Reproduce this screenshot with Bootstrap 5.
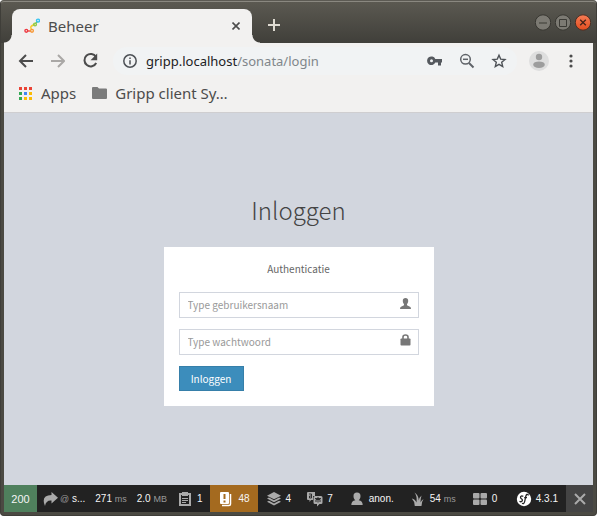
<!DOCTYPE html>
<html lang="nl">
<head>
<meta charset="utf-8">
<meta name="viewport" content="width=device-width, initial-scale=1">
<title>Beheer</title>
<link href="https://cdn.jsdelivr.net/npm/bootstrap@5.3.0/dist/css/bootstrap.min.css" rel="stylesheet">
<style>
body { background: #fff; }
svg { display: block; flex: none; }
button { border: 0; padding: 0; background: none; }
.window-frame { background: #4b4a43; border: 1px solid #3f3e39; border-top-color: #5c5a53; border-radius: 4px; padding: 0 3px 3px; font-family: "Noto Sans", "Open Sans", sans-serif; font-size: 15px; }
.title-bar { height: 42px; margin: 0 -3px; padding: 0 5px 0 8px; background: linear-gradient(#5b5951, #403f3a); border-top: 1px solid #8a8880; border-radius: 3px 3px 0 0; }
.browser-tab { position: relative; width: 240px; height: 34px; margin-left: 3px; padding: 0 12px; background: #f2f1f0; border-radius: 8px 8px 0 0; color: #4c4c4c; }
.browser-tab::before, .browser-tab::after { content: ""; position: absolute; bottom: 0; width: 8px; height: 8px; }
.browser-tab::before { left: -8px; background: radial-gradient(circle at 0 0, transparent 7px, #f2f1f0 8px); }
.browser-tab::after { right: -8px; background: radial-gradient(circle at 100% 0, transparent 7px, #f2f1f0 8px); }
.chrome-area { background: #f2f1f0; color: #4c4c4c; border-bottom: 1px solid #cfced0; }
.nav-row { height: 35px; padding: 0 16px 0 13px; }
.address-box { height: 28px; margin-left: 12px; border-radius: 14px; background: #f1f3f4; padding: 0 10px; }
.address-text { color: #202124; font-size: 13px; line-height: 20px; margin-left: 9px; }
.address-text span { color: #80868b; }
.marks-row { height: 34px; padding: 0 15px 4px; }
.marks-row a { color: #4c4c4c; }
.page-area { background: #d2d6de; font-family: "Noto Sans CJK SC", sans-serif; }
.login-title { font-size: 24px; line-height: 36px; font-weight: 200; color: #444; margin: 79px 0 19px; }
.login-panel { width: 270px; background: #fff; padding: 15px; margin-bottom: 79px; }
.login-note { font-size: 10px; line-height: 14px; color: #666; margin-bottom: 16px; }
.field-box { border: 1px solid #d2d6de; height: 26px; padding: 0 7px 0 8px; margin-bottom: 11px; }
.field-box input { border: 0; outline: 0; padding: 0; min-width: 0; font-size: 10px; line-height: 16px; color: #555; }
.field-box input::placeholder { color: #999; opacity: 1; }
.login-btn { height: 25px; width: 65px; background: #3c8dbc; border: 1px solid #367fa9; color: #fff; font-size: 10px; line-height: 16px; }
.debug-bar { background: #222; height: 27px; color: #f5f5f5; font-family: "Liberation Sans", Arial, sans-serif; font-size: 10px; line-height: 14px; }
.debug-bar a, .debug-close { display: flex; flex: none; align-items: center; height: 100%; padding: 0 8px; gap: 4px; color: #f5f5f5; text-decoration: none; white-space: nowrap; }
.debug-bar i { font-style: normal; font-size: 9px; color: #999; }
.debug-bar .state-code { width: 33px; padding: 0; justify-content: center; background: #4f805d; font-size: 11px; }
.debug-bar .pad-route { padding: 0 5px; gap: 2px; }
.debug-bar .pad-slim { padding: 0 5px; }
.debug-bar .pad-mem { padding: 0 2px 0 5px; }
.debug-bar .state-warn { background: #a46a1f; }
.debug-bar .debug-close { width: 27px; padding: 0; justify-content: center; background: #444; }
</style>
<script src="https://cdn.jsdelivr.net/npm/bootstrap@5.3.0/dist/js/bootstrap.bundle.min.js"></script>
</head>
<body>
<div class="window-frame min-vh-100 d-flex flex-column">
  <header class="title-bar d-flex align-items-end">
    <div class="browser-tab d-flex align-items-center">
      <svg width="16" height="16" viewBox="0 0 16 16" fill="none" stroke-width="1.4"><path d="M3 13H7" stroke="#f04a3a"/><path d="M7.500 11.500Q5.500 8 9 7.500" stroke="#f9c31f"/><path d="M8 7.500L11 6.500" stroke="#f0d52b"/><path d="M11.500 5.500L13.500 3.500" stroke="#79c65b"/><circle cx="2.300" cy="12.800" r="1.400" stroke="#ee3942"/><circle cx="8" cy="12.800" r="1.400" stroke="#f79a39"/><circle cx="11" cy="6.500" r="1.400" stroke="#8cc84b"/><circle cx="14" cy="2.600" r="1.500" stroke="#35c3f0"/></svg>
      <span class="ms-2 flex-grow-1">Beheer</span>
      <button type="button" aria-label="Tab sluiten"><svg width="8" height="8" viewBox="0 0 8 8" stroke="#4c4c4c" stroke-width="1.600"><path d="M.5 .5L7.500 7.500M7.500 .5L.5 7.500"/></svg></button>
    </div>
    <button type="button" class="ms-3 mb-2 pb-1" aria-label="Nieuw tabblad"><svg width="12" height="12" viewBox="0 0 12 12" stroke="#dfdbd2" stroke-width="2"><path d="M6 0V12M0 6H12"/></svg></button>
    <div class="d-flex ms-auto mb-2 pb-1 gap-1">
      <button type="button" aria-label="Minimaliseren"><svg width="16" height="17" viewBox="0 0 16 17"><circle cx="8" cy="8.500" r="7.700" fill="#7c7a73" stroke="#383732"/><path d="M4 9H12" stroke="#3b3a35"/></svg></button>
      <button type="button" aria-label="Maximaliseren"><svg width="16" height="17" viewBox="0 0 16 17"><circle cx="8" cy="8.500" r="7.700" fill="#7c7a73" stroke="#383732"/><path d="M4.500 5.500H11.500V12.500H4.500Z" fill="none" stroke="#3b3a35"/></svg></button>
      <button type="button" aria-label="Sluiten"><svg width="16" height="17" viewBox="0 0 16 17"><defs><linearGradient id="closeFill" x2="0" y2="1"><stop stop-color="#f57c55"/><stop offset="1" stop-color="#e24d1f"/></linearGradient></defs><circle cx="8" cy="8.500" r="7.700" fill="url(#closeFill)" stroke="#4a2f25"/><path d="M5.200 5.700L10.800 11.300M10.800 5.700L5.200 11.300" stroke="#43231a" stroke-width="1.300"/></svg></button>
    </div>
  </header>

  <div class="chrome-area">
    <nav class="nav-row d-flex align-items-center">
      <button type="button" aria-label="Terug"><svg width="18" height="18" viewBox="0 0 18 18" fill="none" stroke="#4c4c4c" stroke-width="2"><path d="M16 9H3M9 3L3 9L9 15"/></svg></button>
      <button type="button" class="ms-3" aria-label="Vooruit"><svg width="14" height="18" viewBox="0 0 14 18" fill="none" stroke="#aaa8a6" stroke-width="2"><path d="M0 9H13M7 3L13 9L7 15"/></svg></button>
      <button type="button" class="ms-3" aria-label="Vernieuwen"><svg width="20" height="18" viewBox="0 0 20 18"><path d="M15 5A6.200 6.200 0 1 0 15.200 11" fill="none" stroke="#4c4c4c" stroke-width="2"/><path d="M16.200 1.500V8.200H9.500Z" fill="#4c4c4c"/></svg></button>
      <div class="address-box d-flex align-items-center flex-grow-1">
        <svg width="14" height="14" viewBox="0 0 14 14" fill="none" stroke="#4d5156" stroke-width="1.500"><circle cx="7" cy="7" r="6.200"/><path d="M7 6.200V10.500M7 3.500V5"/></svg>
        <div class="address-text flex-grow-1">gripp.localhost<span>/sonata/login</span></div>
        <div class="d-flex align-items-center gap-3">
          <button type="button" aria-label="Wachtwoorden"><svg width="16" height="14" viewBox="0 0 16 14"><path fill="#55595e" fill-rule="evenodd" d="M8.300 5A4.300 4.300 0 1 0 8.300 8.500H11V11.500H14V8.500H15V5ZM4.500 5.200A1.500 1.500 0 1 1 4.500 8.200A1.500 1.500 0 0 1 4.500 5.200Z"/></svg></button>
          <button type="button" aria-label="Zoom"><svg width="16" height="16" viewBox="0 0 16 16" fill="none" stroke="#5f6368" stroke-width="1.500"><circle cx="6.500" cy="6.300" r="4.800"/><path d="M4 6.300H9"/><path d="M10 10L14.500 14.500" stroke-width="1.900"/></svg></button>
          <button type="button" aria-label="Bladwijzer"><svg width="16" height="16" viewBox="0 0 16 16" fill="none" stroke="#4d5156" stroke-width="1.400"><path d="M8 2.200L9.700 6.100L14 6.500L10.700 9.300L11.700 13.600L8 11.300L4.300 13.600L5.300 9.300L2 6.500L6.300 6.100Z"/></svg></button>
        </div>
      </div>
      <button type="button" class="ms-2 ps-1" aria-label="Profiel"><svg width="20" height="20" viewBox="0 0 20 20"><circle cx="10" cy="10" r="10" fill="#dedede"/><circle cx="10" cy="6" r="3.200" fill="#9d9d9d"/><ellipse cx="10" cy="13.700" rx="5.800" ry="3.300" fill="#9d9d9d"/></svg></button>
      <button type="button" class="ms-3 px-1" aria-label="Menu"><svg width="4" height="14" viewBox="0 0 4 14" fill="#4c4c4c"><circle cx="2" cy="2" r="1.600"/><circle cx="2" cy="7" r="1.600"/><circle cx="2" cy="12" r="1.600"/></svg></button>
    </nav>
    <div class="marks-row d-flex align-items-center">
      <a href="#" class="d-flex align-items-center text-decoration-none"><svg width="14" height="13" viewBox="0 0 14 13"><path fill="#ea4335" d="M0 0H3V3H0ZM5 0H8V3H5ZM10 0H13V3H10Z"/><path fill="#34a853" d="M0 5H3V8H0ZM0 10H3V13H0Z"/><path fill="#4285f4" d="M5 5H8V8H5Z"/><path fill="#fbbc05" d="M10 5H13V8H10ZM10 10H13V13H10ZM5 10H8V13H5Z"/></svg><span class="ms-2">Apps</span></a>
      <a href="#" class="d-flex align-items-center text-decoration-none ms-3"><svg width="15" height="12" viewBox="0 0 15 12"><path fill="#7b7b7b" d="M1 0H5.500L7 1.500H14Q15 1.500 15 2.500V11Q15 12 14 12H1Q0 12 0 11V1Q0 0 1 0Z"/></svg><span class="ms-2">Gripp client Sy…</span></a>
    </div>
  </div>

  <main class="page-area flex-grow-1 d-flex flex-column align-items-center">
    <h1 class="login-title">Inloggen</h1>
    <form class="login-panel">
      <p class="login-note text-center">Authenticatie</p>
      <div class="field-box d-flex align-items-center">
        <input id="username" class="flex-grow-1" type="text" placeholder="Type gebruikersnaam" aria-label="Gebruikersnaam">
        <label for="username"><svg class="mb-1" width="11" height="11" viewBox="0 0 11 11" fill="#777"><path d="M5.500 0C7.200 0 8.200 1 8.200 2.800C8.200 4.500 7.600 5.500 7 6.200V7.200L10 8.700Q11 9.200 11 11H0Q0 9.200 1 8.700L4 7.200V6.200C3.400 5.500 2.800 4.500 2.800 2.800C2.800 1 3.800 0 5.500 0Z"/></svg></label>
      </div>
      <div class="field-box d-flex align-items-center">
        <input id="password" class="flex-grow-1" type="password" placeholder="Type wachtwoord" aria-label="Wachtwoord">
        <label for="password"><svg class="mb-1" width="11" height="12" viewBox="0 0 11 12"><path d="M3 5V3Q3 1 5.500 1T8 3V5" fill="none" stroke="#777" stroke-width="1.600"/><rect x=".5" y="4.500" width="10" height="7" rx=".8" fill="#777"/></svg></label>
      </div>
      <button type="submit" class="login-btn d-block">Inloggen</button>
    </form>
  </main>

  <footer class="debug-bar d-flex align-items-center">
    <a href="#" class="state-code">200</a>
    <a href="#" class="pad-route"><svg width="16" height="16" viewBox="0 0 16 16"><path fill="#aaa" d="M9.500 1L16 6.800L9.500 12.500V9.500Q4 9 3 15Q-1.500 4.500 9.500 4Z"/></svg><span><i>@</i> s...</span></a>
    <a href="#" class="pad-slim"><span>271 <i>ms</i></span></a>
    <a href="#" class="pad-mem"><span>2.0 <i>MB</i></span></a>
    <a href="#"><svg width="16" height="16" viewBox="0 0 16 16"><path d="M3 3H13V14H3Z" fill="none" stroke="#aaa" stroke-width="2"/><path d="M5 1H11V5H5Z" fill="#aaa"/><path d="M5 7.500H11M5 9.500H11M5 11.500H9" stroke="#aaa"/></svg><span>1</span></a>
    <a href="#" class="state-warn"><svg width="16" height="16" viewBox="0 0 16 16"><path fill="#fff" fill-rule="evenodd" d="M3 1H10Q11 1 11 2V12Q11 13 10 13H3Q2 13 2 12V2Q2 1 3 1ZM5.500 3V8H7.500V3ZM5.500 9.500V11.500H7.500V9.500Z"/><path d="M12.500 3V13Q12.500 14.500 11 14.500H4" fill="none" stroke="#fff" stroke-width="1.500"/></svg><span>48</span></a>
    <a href="#"><svg width="16" height="16" viewBox="0 0 16 16" fill="#aaa"><path d="M8 1L15 4.700L8 8.300L1 4.700Z"/><path d="M1 7.500L3 6.500L8 9.200L13 6.500L15 7.500L8 11.200Z"/><path d="M1 10.700L3 9.700L8 12.400L13 9.700L15 10.700L8 14.500Z"/></svg><span>4</span></a>
    <a href="#"><svg width="16" height="16" viewBox="0 0 16 16"><path fill="#aaa" d="M1 1H8V5H6V9H4L2.500 11V9H1Q0 9 0 8V2Q0 1 1 1Z"/><path fill="#aaa" d="M8 5H14Q15.500 5 15.500 6.500V11.500Q15.500 13 14 13H12.500L10 15.500V13H8Q6.500 13 6.500 11.500V6.500Q6.500 5 8 5Z"/><path d="M2 3H4.500V7H2.500V5H4.500M8 7.500H14M11 6V8M9 11V8.500H13V11M11 8V11.500" fill="none" stroke="#222" stroke-width=".9"/></svg><span>7</span></a>
    <a href="#"><svg width="16" height="16" viewBox="0 0 16 16"><path fill="#aaa" d="M8 1.500C10.500 1.500 11.500 3 11.500 5C11.500 7 10.700 8.500 9.700 9.300Q13.700 10 13.700 14H2.300Q2.300 10 6.300 9.300C5.300 8.500 4.500 7 4.500 5C4.500 3 5.500 1.500 8 1.500Z"/></svg><span>anon.</span></a>
    <a href="#"><svg width="16" height="16" viewBox="0 0 16 16"><path fill="#aaa" d="M4.800 15Q4.500 10 1.800 7.500Q5 8 6.500 11.500Q7.300 5 4.500 1.500Q8.500 4 8.800 9.500Q9.500 6 11.500 4.500Q10.500 8 10.500 11.500Q11.500 9 13.500 8Q11.500 11 11.500 15Z"/></svg><span>54 <i>ms</i></span></a>
    <a href="#"><svg width="16" height="16" viewBox="0 0 16 16" fill="#aaa"><rect x="1" y="2" width="6.500" height="5.500" rx="1"/><rect x="8.500" y="2" width="6.500" height="5.500" rx="1"/><rect x="1" y="8.500" width="6.500" height="5.500" rx="1"/><rect x="8.500" y="8.500" width="6.500" height="5.500" rx="1"/></svg><span>0</span></a>
    <a href="#" class="ms-auto"><svg width="16" height="16" viewBox="0 0 16 16"><circle cx="8" cy="8" r="7.200" fill="#fff"/><path d="M7.300 5.300Q4.800 4.300 4.500 6.200Q4.500 7.200 5.700 8Q7 9 5.900 10.300Q4.800 11.200 3.500 10.300M12.300 4.500Q12.200 3 10.900 3.400Q9.800 4 9.200 8Q8.600 12.200 7.500 12.600Q6.600 12.900 6.300 12M8.200 6.700H11" fill="none" stroke="#222" stroke-width="1.300"/></svg><span>4.3.1</span></a>
    <button type="button" class="debug-close" aria-label="Werkbalk sluiten"><svg width="12" height="12" viewBox="0 0 12 12" stroke="#aaa" stroke-width="2"><path d="M1 1L11 11M11 1L1 11"/></svg></button>
  </footer>
</div>
</body>
</html>
